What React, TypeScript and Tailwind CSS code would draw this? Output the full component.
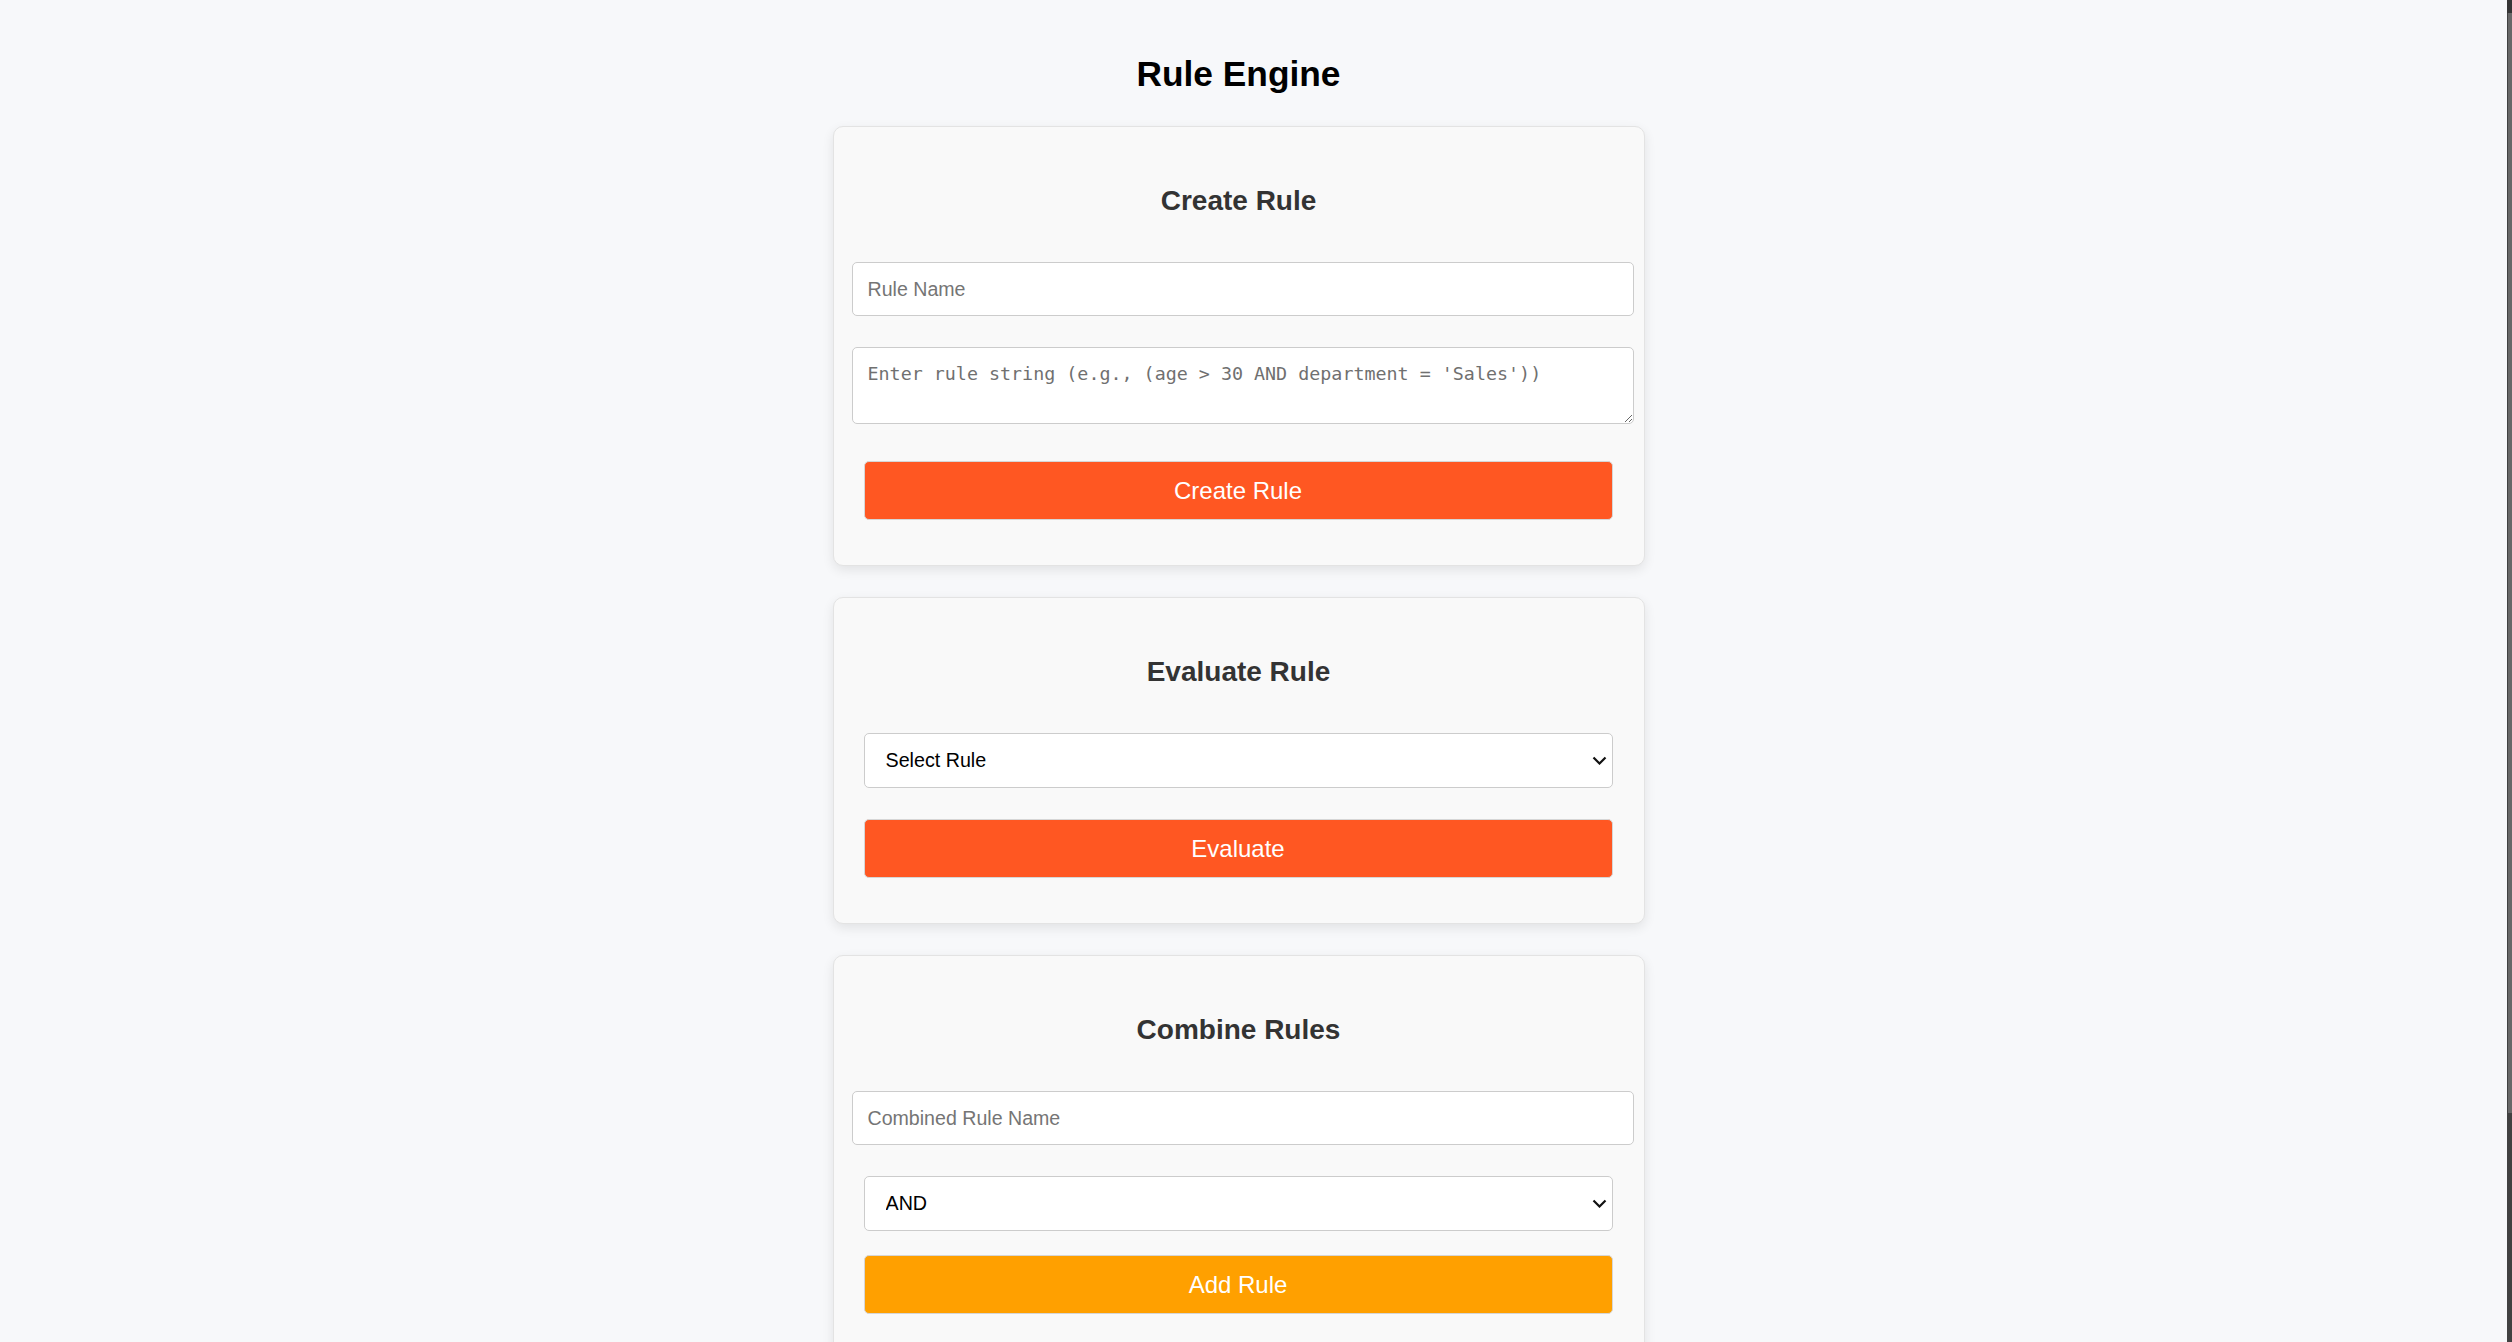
import React from "react";

function Chevron() {
  return (
    <svg
      className="pointer-events-none absolute right-[6px] top-[23px]"
      width="15"
      height="9"
      viewBox="0 0 15 9"
      fill="none"
    >
      <polyline points="1.5,1.5 7.5,7.5 13.5,1.5" stroke="#111" strokeWidth="2.2" />
    </svg>
  );
}

function Select({ value, options, className }: { value: string; options: string[]; className: string }) {
  return (
    <div className={"relative mx-[30px] w-[749px] " + className}>
      <select
        defaultValue={value}
        className="block h-[55px] w-full appearance-none rounded-[5px] border border-[#cccccc] bg-white pl-[21px] pr-[30px] text-[19.7px] text-black outline-none"
      >
        {options.map((o) => (
          <option key={o}>{o}</option>
        ))}
      </select>
      <Chevron />
    </div>
  );
}

function Button({ label, color, className }: { label: string; color: "orange" | "amber"; className: string }) {
  return (
    <button
      className={
        "mx-[30px] block h-[59px] w-[749px] rounded-[5px] border border-[#d6d6d6] text-center text-[24px] leading-[28px] text-white " +
        (color === "orange" ? "bg-[#ff5722] " : "bg-[#ffa000] ") +
        className
      }
    >
      {label}
    </button>
  );
}

export default function App() {
  return (
    <div className="flex h-screen w-full overflow-hidden bg-[#f7f8fa] font-['Liberation_Sans',Arial,sans-serif]">
      <main className="flex flex-1 flex-col items-center pr-[30px] pt-[54px]">
        <h1 className="text-[35.3px] font-bold leading-[40px] text-black">Rule Engine</h1>

        <section className="mt-[32px] w-[812px] shrink-0 rounded-[10px] border border-[#e3e3e3] bg-[#f9f9f9] pb-[45px] pt-[58px] shadow-[0_4px_12px_rgba(0,0,0,0.09)]">
          <h2 className="text-center text-[28px] font-bold leading-[32px] text-[#333333]">Create Rule</h2>
          <input
            type="text"
            placeholder="Rule Name"
            className="ml-[18px] mt-[45px] block h-[54px] w-[782px] rounded-[5px] border border-[#cccccc] bg-white px-[15px] text-[19.6px] text-black outline-none placeholder:text-[#757575]"
          />
          <textarea
            placeholder="Enter rule string (e.g., (age > 30 AND department = 'Sales'))"
            className="ml-[18px] mt-[31px] block h-[77px] w-[782px] rounded-[5px] border border-[#cccccc] bg-white px-[15px] pt-[15px] font-['DejaVu_Sans_Mono',monospace] text-[18.35px] leading-[22px] text-black outline-none placeholder:text-[#707070]"
          />
          <Button label="Create Rule" color="orange" className="mt-[37px]" />
        </section>

        <section className="mt-[31px] w-[812px] shrink-0 rounded-[10px] border border-[#e3e3e3] bg-[#f9f9f9] pb-[45px] pt-[58px] shadow-[0_4px_12px_rgba(0,0,0,0.09)]">
          <h2 className="text-center text-[28px] font-bold leading-[32px] text-[#333333]">Evaluate Rule</h2>
          <Select value="Select Rule" options={["Select Rule"]} className="mt-[45px]" />
          <Button label="Evaluate" color="orange" className="mt-[31px]" />
        </section>

        <section className="mt-[31px] w-[812px] shrink-0 rounded-[10px] border border-[#e3e3e3] bg-[#f9f9f9] pb-[45px] pt-[58px] shadow-[0_4px_12px_rgba(0,0,0,0.09)]">
          <h2 className="text-center text-[28px] font-bold leading-[32px] text-[#333333]">Combine Rules</h2>
          <input
            type="text"
            placeholder="Combined Rule Name"
            className="ml-[18px] mt-[45px] block h-[54px] w-[782px] rounded-[5px] border border-[#cccccc] bg-white px-[15px] text-[19.6px] text-black outline-none placeholder:text-[#757575]"
          />
          <Select value="AND" options={["AND", "OR"]} className="mt-[31px]" />
          <Button label="Add Rule" color="amber" className="mt-[24px]" />
        </section>
      </main>
      <div className="flex h-full w-[5px] shrink-0 flex-col bg-[#414141]">
        <div className="h-[13px] bg-[#353535]" />
        <div className="ml-[1px] h-[1100px] bg-[#686868]" />
      </div>
    </div>
  );
}
